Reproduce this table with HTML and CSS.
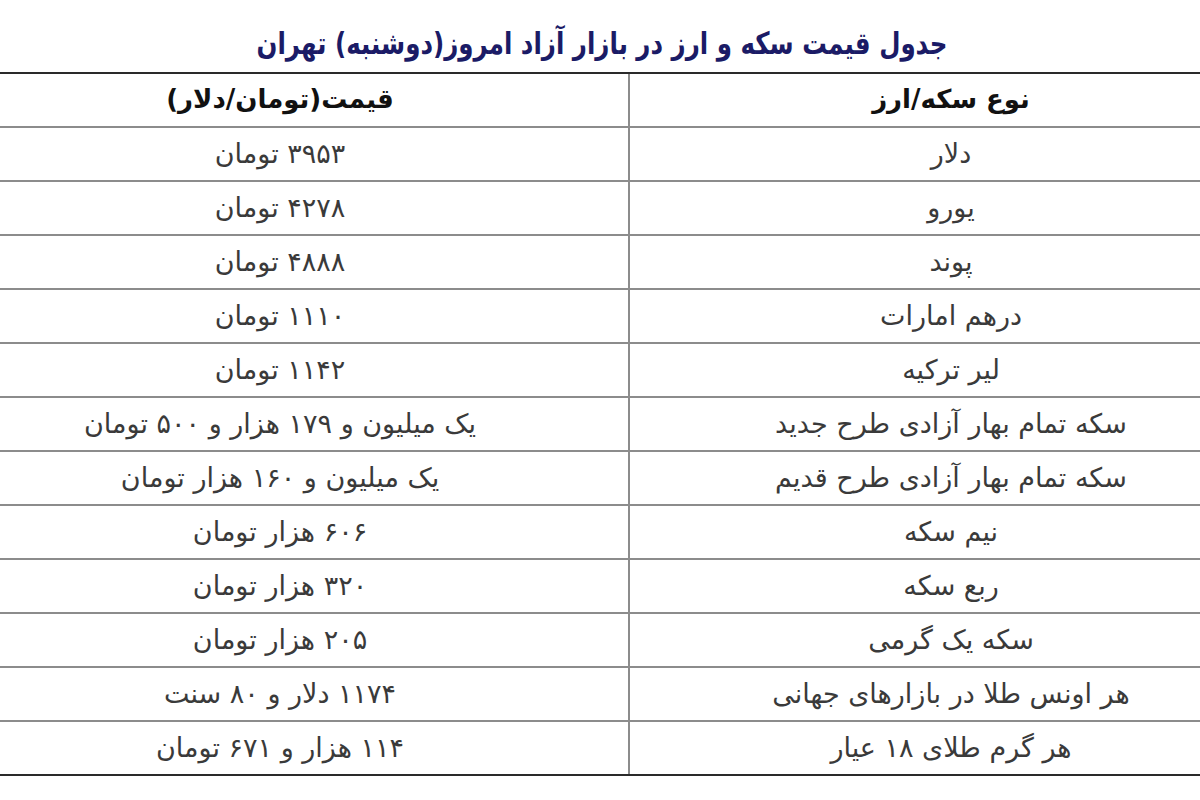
FILE: index.html
```html
<!DOCTYPE html>
<html lang="fa">
<head>
<meta charset="utf-8">
<title>جدول قیمت سکه و ارز</title>
<link rel="stylesheet" href="styles.css">
</head>
<body>
<div class="page">
  <div class="title-bar">
    <h1 class="title" dir="rtl">جدول قیمت سکه و ارز در بازار آزاد امروز(دوشنبه) تهران</h1>
  </div>
  <div class="frame">
    <div class="table" dir="rtl">
      <div class="row head"><div class="cell">نوع سکه/ارز</div><div class="cell">قیمت(تومان/دلار)</div></div>
      <div class="row"><div class="cell">دلار</div><div class="cell">۳۹۵۳ تومان</div></div>
      <div class="row"><div class="cell">یورو</div><div class="cell">۴۲۷۸ تومان</div></div>
      <div class="row"><div class="cell">پوند</div><div class="cell">۴۸۸۸ تومان</div></div>
      <div class="row"><div class="cell">درهم امارات</div><div class="cell">۱۱۱۰ تومان</div></div>
      <div class="row"><div class="cell">لیر ترکیه</div><div class="cell">۱۱۴۲ تومان</div></div>
      <div class="row"><div class="cell">سکه تمام بهار آزادی طرح جدید</div><div class="cell">یک میلیون و ۱۷۹ هزار و ۵۰۰ تومان</div></div>
      <div class="row"><div class="cell">سکه تمام بهار آزادی طرح قدیم</div><div class="cell">یک میلیون و ۱۶۰ هزار تومان</div></div>
      <div class="row"><div class="cell">نیم سکه</div><div class="cell">۶۰۶ هزار تومان</div></div>
      <div class="row"><div class="cell">ربع سکه</div><div class="cell">۳۲۰ هزار تومان</div></div>
      <div class="row"><div class="cell">سکه یک گرمی</div><div class="cell">۲۰۵ هزار تومان</div></div>
      <div class="row"><div class="cell">هر اونس طلا در بازارهای جهانی</div><div class="cell">۱۱۷۴ دلار و ۸۰ سنت</div></div>
      <div class="row last"><div class="cell">هر گرم طلای ۱۸ عیار</div><div class="cell">۱۱۴ هزار و ۶۷۱ تومان</div></div>
    </div>
  </div>
</div>
</body>
</html>
```
FILE: styles.css
```css
html, body {
  margin: 0;
  padding: 0;
  background: #ffffff;
}
.page {
  width: 1200px;
  height: 800px;
  overflow: hidden;
  font-family: "DejaVu Sans", sans-serif;
}
.title-bar {
  height: 72px;
  display: flex;
  align-items: center;
  justify-content: center;
  padding: 14px 0 0 4px;
  box-sizing: border-box;
}
.title {
  margin: 0;
  font-size: 24.5px;
  font-weight: bold;
  color: #1b1b66;
  transform: scaleY(1.25);
}
.frame {
  width: 1200px;
  overflow: hidden;
}
.table {
  width: 1340px;
  margin-left: -68px;
  border-top: 2px solid #2a2a2a;
}
.row {
  display: grid;
  grid-template-columns: 644px 696px;
  height: 54px;
  box-sizing: border-box;
  border-bottom: 2px solid #8c8c8c;
}
.row.last {
  border-bottom-color: #2a2a2a;
}
.cell {
  display: flex;
  align-items: center;
  justify-content: center;
  font-size: 27px;
  color: #3a3a3a;
  padding-bottom: 2px;
  white-space: nowrap;
}
.cell:first-child {
  border-left: 2px solid #8c8c8c;
}
.head .cell {
  font-weight: bold;
  font-size: 26px;
  color: #111111;
}
```
